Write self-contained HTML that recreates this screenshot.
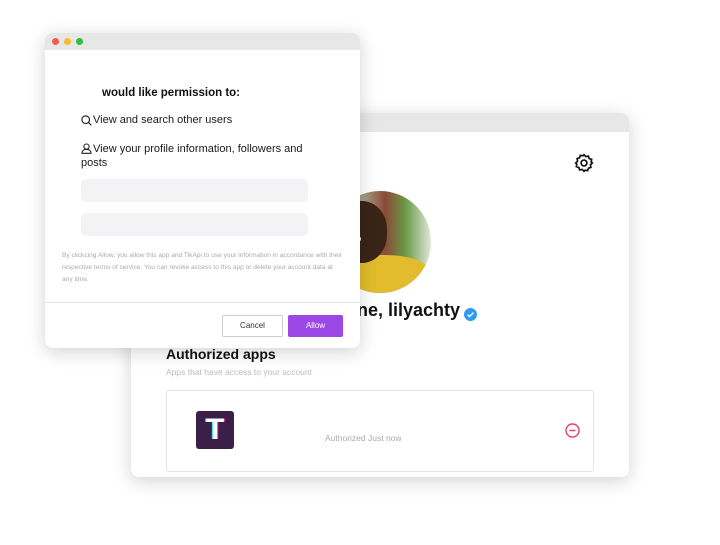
<!DOCTYPE html>
<html><head><style>
body{margin:0;width:720px;height:545px;background:#fff;position:relative;overflow:hidden;font-family:"Liberation Sans",sans-serif}
.win{position:absolute;background:#fff;border-radius:8px;overflow:hidden;box-shadow:0 4px 18px rgba(0,0,0,.18)}
.bar{background:#e7e7e7}
.abs{position:absolute}
</style></head><body>
<div class="win" style="left:131px;top:113px;width:498px;height:364px">
 <div class="bar" style="height:19px"></div>
 <svg class="abs" style="left:443px;top:40px" width="20" height="20" viewBox="0 0 24 24" fill="none" stroke="#111" stroke-width="2"><path d="M12 2l2.2 2.3 3.1-.6.9 3 3 .9-.6 3.1L22 12l-2.3 2.2.6 3.1-3 .9-.9 3-3.1-.6L12 22l-2.2-2.3-3.1.6-.9-3-3-.9.6-3.1L2 12l2.3-2.2-.6-3.1 3-.9.9-3 3.1.6z"/><circle cx="12" cy="12" r="3.5"/></svg>
 <div class="abs" style="left:198px;top:78px;width:102px;height:102px;border-radius:50%;overflow:hidden;background:linear-gradient(90deg,#9a9080 0%,#a89c86 35%,#8a4a36 55%,#6a9a48 75%,#dfe8d8 100%)">
  <div class="abs" style="left:0;top:64px;width:102px;height:40px;background:#e2bc2c;border-radius:45% 45% 0 0"></div>
  <div class="abs" style="left:2px;top:10px;width:56px;height:62px;background:#3a2418;border-radius:45%"></div>
  <div class="abs" style="left:10px;top:45px;width:22px;height:6px;background:#f4f0ea;border-radius:3px"></div>
 </div>
 <div class="abs" style="left:226px;top:187px;font-size:18px;font-weight:bold;color:#111">ne, lilyachty</div>
 <svg class="abs" style="left:333px;top:195px" width="13" height="13" viewBox="0 0 12 12"><circle cx="6" cy="6" r="6" fill="#2d9cf0"/><path d="M3.3 6.2l1.8 1.7 3.6-3.6" fill="none" stroke="#fff" stroke-width="1.3"/></svg>
 <div class="abs" style="left:35px;top:233px;font-size:14px;font-weight:bold;color:#111">Authorized apps</div>
 <div class="abs" style="left:35px;top:254px;font-size:8.5px;color:#bbb">Apps that have access to your account</div>
 <div class="abs" style="left:35px;top:277px;width:426px;height:80px;border:1px solid #e5e5e5;border-radius:3px">
  <div class="abs" style="left:29px;top:20px;width:38px;height:38px;background:#3b1f47;border-radius:3px;color:#fff;font-weight:bold;font-size:30px;text-align:center;line-height:38px;text-shadow:-1px 0 #2ee,1px 0 #f2a">T</div>
  <div class="abs" style="left:158px;top:42px;font-size:8.5px;color:#aaa">Authorized Just now</div>
  <svg class="abs" style="left:398px;top:32px" width="15" height="15" viewBox="0 0 15 15"><circle cx="7.5" cy="7.5" r="6.5" fill="none" stroke="#e0445e" stroke-width="1.4"/><path d="M4.5 7.5h6" stroke="#e0445e" stroke-width="1.6"/></svg>
 </div>
</div>
<div class="win" style="left:45px;top:33px;width:315px;height:315px">
 <div class="bar" style="height:17px;position:relative">
  <span class="abs" style="left:7px;top:5px;width:7px;height:7px;border-radius:50%;background:#f25b55"></span>
  <span class="abs" style="left:19px;top:5px;width:7px;height:7px;border-radius:50%;background:#f7bb2e"></span>
  <span class="abs" style="left:31px;top:5px;width:7px;height:7px;border-radius:50%;background:#2fc23f"></span>
 </div>
 <div class="abs" style="left:57px;top:54px;font-size:11.5px;font-weight:bold;color:#111">would like permission to:</div>
 <svg class="abs" style="left:36px;top:82px" width="11" height="11" viewBox="0 0 11 11" fill="none" stroke="#222" stroke-width="1.2"><circle cx="4.7" cy="4.7" r="3.8"/><path d="M7.5 7.5l2.8 2.8"/></svg>
 <div class="abs" style="left:48px;top:81px;font-size:11px;color:#1a1a1a">View and search other users</div>
 <svg class="abs" style="left:36px;top:110px" width="11" height="11" viewBox="0 0 11 11" fill="none" stroke="#222" stroke-width="1.1"><circle cx="5.5" cy="3.6" r="2.6"/><path d="M1 10.3c0-2.6 2-4 4.5-4s4.5 1.4 4.5 4z"/></svg>
 <div class="abs" style="left:36px;top:109px;width:240px;font-size:11px;line-height:14px;color:#1a1a1a;text-indent:12px">View your profile information, followers and posts</div>
 <div class="abs" style="left:36px;top:146px;width:227px;height:23px;background:#f3f3f6;border-radius:5px"></div>
 <div class="abs" style="left:36px;top:180px;width:227px;height:23px;background:#f3f3f6;border-radius:5px"></div>
 <div class="abs" style="left:17px;top:217px;width:280px;font-size:6.6px;line-height:12px;color:#aaa">By clickcing Allow, you allow this app and TikApi to use your information in accordance with their respective terms of service. You can revoke access to this app or delete your account data at any time.</div>
 <div class="abs" style="left:0;top:269px;width:315px;height:1px;background:#e2e2e2"></div>
 <div class="abs" style="left:177px;top:282px;width:59px;height:20px;border:1px solid #ccc;border-radius:2px;font-size:8px;text-align:center;line-height:20px;color:#333">Cancel</div>
 <div class="abs" style="left:243px;top:282px;width:55px;height:22px;background:#9b48e6;border-radius:2px;font-size:8px;text-align:center;line-height:22px;color:#fff">Allow</div>
</div>
</body></html>
